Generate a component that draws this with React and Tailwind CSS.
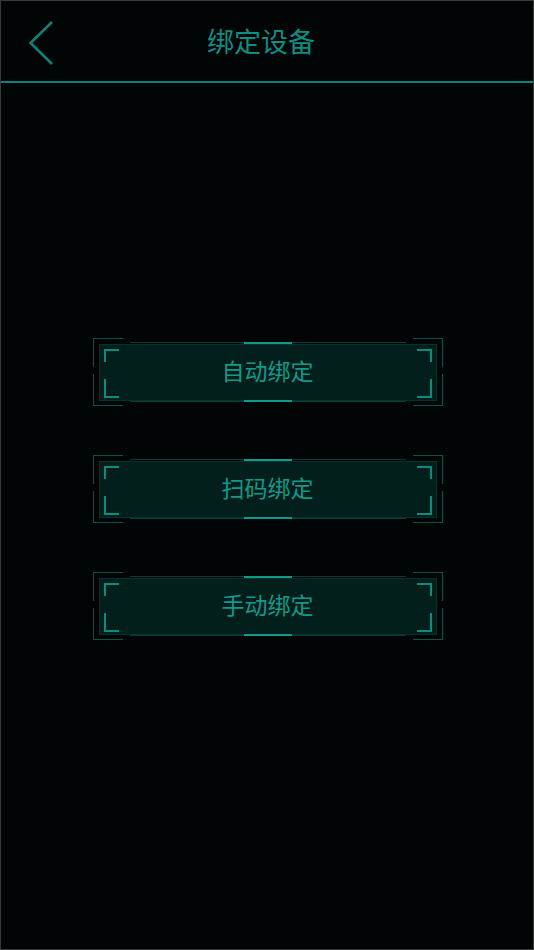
import React from "react";

const font = { fontFamily: '"Noto Sans CJK SC", "Noto Sans", sans-serif' };

function EdgeLine({ pos }) {
  return (
    <div className={`absolute left-[37px] w-[276px] h-[2px] flex justify-center ${pos}`}>
      <div className="w-full h-px bg-[#0a3d38] absolute top-0" />
      <div className="relative w-[48px] h-[2px] bg-[#109a8c]" />
    </div>
  );
}

function FrameButton({ label }) {
  return (
    <div className="relative w-[350px] h-[68px] pt-[6px] pb-[5px] px-[6px]">
      {/* outer corners */}
      <div className="absolute left-0 top-0 w-[30px] h-[29px] border-l border-t border-[#0b524b]" />
      <div className="absolute right-0 top-0 w-[30px] h-[29px] border-r border-t border-[#0b524b]" />
      <div className="absolute left-0 bottom-0 w-[30px] h-[32px] border-l border-b border-[#0b524b]" />
      <div className="absolute right-0 bottom-0 w-[30px] h-[32px] border-r border-b border-[#0b524b]" />
      {/* panel */}
      <div className="relative h-full bg-[#021f1c] border border-[#04322d] flex justify-between px-[4px] pt-[4px] pb-[2px]">
        <div className="flex flex-col justify-between">
          <div className="w-[15px] h-[13px] border-l-2 border-t-2 border-[#0f8a7e]" />
          <div className="w-[15px] h-[19px] border-l-2 border-b-2 border-[#0f8a7e]" />
        </div>
        <div className="flex-1 flex items-center justify-center pb-[6px]">
          <span className="text-[23px] leading-none text-[#13998b]" style={font}>
            {label}
          </span>
        </div>
        <div className="flex flex-col justify-between">
          <div className="w-[15px] h-[13px] border-r-2 border-t-2 border-[#0f8a7e]" />
          <div className="w-[15px] h-[19px] border-r-2 border-b-2 border-[#0f8a7e]" />
        </div>
      </div>
      <EdgeLine pos="top-[4px]" />
      <EdgeLine pos="top-[62px] rotate-180" />
    </div>
  );
}

export default function App() {
  return (
    <div className="w-[534px] h-[950px] border border-[#3a3a3a] bg-[#010505] flex flex-col overflow-hidden">
      <div className="h-[82px] border-b-2 border-[#0b857b] flex items-center">
        <div className="w-[80px] flex pl-[27px] pt-[3px]">
          <svg width="26" height="46" viewBox="0 0 26 46" fill="none">
            <path d="M24 2 L2.5 23 L24 44" stroke="#0e8479" strokeWidth="2.5" />
          </svg>
        </div>
        <div className="flex-1 text-center pr-[12px] pt-[3px]">
          <span className="text-[27px] leading-none text-[#0f8e84]" style={font}>
            绑定设备
          </span>
        </div>
        <div className="w-[80px]" />
      </div>
      <div className="flex flex-col items-center gap-[49px] mt-[255px] pl-[1px]">
        <FrameButton label="自动绑定" />
        <FrameButton label="扫码绑定" />
        <FrameButton label="手动绑定" />
      </div>
    </div>
  );
}
